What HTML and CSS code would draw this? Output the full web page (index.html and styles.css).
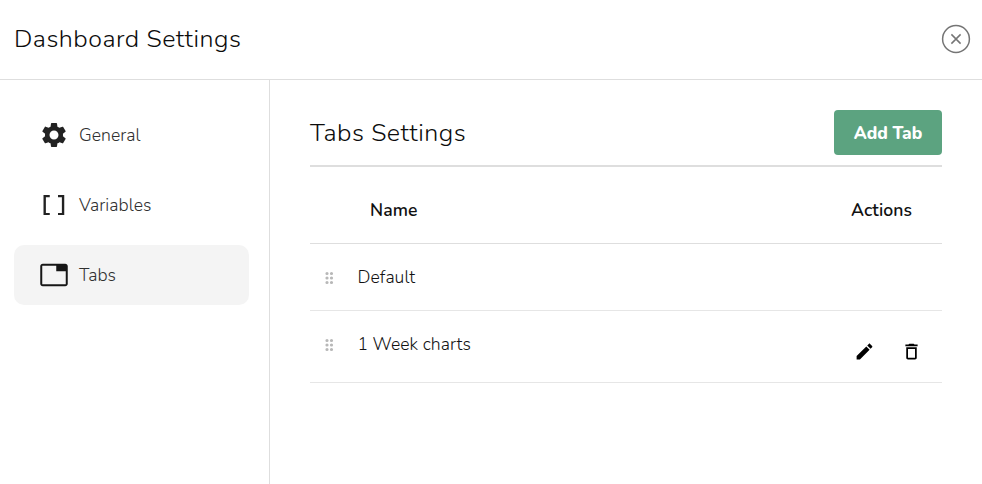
FILE: index.html
```html
<!DOCTYPE html>
<html lang="en">
<head>
<meta charset="utf-8">
<title>Dashboard Settings</title>
<link rel="stylesheet" href="styles.css">
</head>
<body>
<div class="dialog">
  <header class="dialog-header">
    <h1 class="title">Dashboard Settings</h1>
    <button class="close" aria-label="Close"><svg viewBox="0 0 30 30"><circle cx="15" cy="15" r="13.4"/><path d="M10.4 10.4l9.2 9.2M19.6 10.4l-9.2 9.2"/></svg></button>
  </header>
  <div class="dialog-body">
    <nav class="sidebar">
      <a class="nav-item"><svg viewBox="0 0 24 24"><path d="M19.14 12.94c.04-.3.06-.61.06-.94 0-.32-.02-.64-.07-.94l2.03-1.58c.18-.14.23-.41.12-.61l-1.92-3.32c-.12-.22-.37-.29-.59-.22l-2.39.96c-.5-.38-1.03-.7-1.62-.94l-.36-2.54c-.04-.24-.24-.41-.48-.41h-3.84c-.24 0-.43.17-.47.41l-.36 2.54c-.59.24-1.13.57-1.62.94l-2.39-.96c-.22-.08-.47 0-.59.22L2.74 8.87c-.12.21-.08.47.12.61l2.03 1.58c-.05.3-.09.63-.09.94s.02.64.07.94l-2.03 1.58c-.18.14-.23.41-.12.61l1.92 3.32c.12.22.37.29.59.22l2.39-.96c.5.38 1.03.7 1.62.94l.36 2.54c.05.24.24.41.48.41h3.84c.24 0 .44-.17.47-.41l.36-2.54c.59-.24 1.13-.56 1.62-.94l2.39.96c.22.08.47 0 .59-.22l1.92-3.32c.12-.22.07-.47-.12-.61l-2.01-1.58zM12 15.6c-1.98 0-3.6-1.62-3.6-3.6s1.62-3.6 3.6-3.6 3.6 1.62 3.6 3.6-1.62 3.6-3.6 3.6z"/></svg><span>General</span></a>
      <a class="nav-item"><svg viewBox="0 0 24 24"><path d="M3.6 4h5v1.7H5.5v12.6h3.1V20h-5zM20.2 4h-5v1.7h3.1v12.6h-3.1V20h5z"/></svg><span>Variables</span></a>
      <a class="nav-item active"><svg viewBox="0 0 24 24"><path d="M21 3H3c-1.100 0-2 .9-2 2v14c0 1.100.9 2 2 2h18c1.100 0 2-.9 2-2V5c0-1.100-.9-2-2-2zm.4 16.400H2.600V4.600H13.800V9h7.600v10.400z"/></svg><span>Tabs</span></a>
    </nav>
    <main class="content">
      <div class="content-header">
        <h2 class="title">Tabs Settings</h2>
        <button class="add">Add Tab</button>
      </div>
      <div class="row head">
        <span class="name">Name</span>
        <span>Actions</span>
      </div>
      <div class="row">
        <svg class="grip" viewBox="0 0 10 14"><path d="M3 2.500h0M7.500 2.500h0M3 7h0M7.500 7h0M3 11.500h0M7.500 11.500h0"/></svg>
        <span class="name">Default</span>
      </div>
      <div class="row last">
        <svg class="grip" viewBox="0 0 10 14"><path d="M3 2.500h0M7.500 2.500h0M3 7h0M7.500 7h0M3 11.500h0M7.500 11.500h0"/></svg>
        <span class="name">1 Week charts</span>
        <div class="actions">
          <svg viewBox="0 0 24 24"><path d="M3 17.250V21h3.750L17.810 9.940l-3.750-3.750L3 17.250zM20.710 7.040c.39-.39.39-1.020 0-1.410l-2.340-2.340c-.39-.39-1.020-.39-1.410 0l-1.830 1.830 3.750 3.750 1.830-1.830z"/></svg>
          <svg viewBox="0 0 24 24"><path d="M6 19c0 1.100.9 2 2 2h8c1.100 0 2-.9 2-2V7H6v12zM8 9h8v10H8V9zm7.500-5l-1-1h-5l-1 1H5v2h14V4z"/></svg>
        </div>
      </div>
    </main>
  </div>
</div>
</body>
</html>
```
FILE: styles.css
```css
* { box-sizing: border-box; }
body { margin: 0; background: #fff; color: #121212; font: 300 17.6px/24px Nunito, Lato, sans-serif; letter-spacing: .06px; }
button { font-family: inherit; border: 0; padding: 0; }
.dialog { height: 484px; display: flex; flex-direction: column; overflow: hidden; }
.dialog-header { height: 80px; flex: none; display: flex; align-items: center; justify-content: space-between; padding: 0 11px 2px 14px; border-bottom: 1px solid #dedede; }
.title { margin: 0; font-size: 25px; line-height: 34px; letter-spacing: .5px; font-weight: 300; color: #0c0c0c; white-space: nowrap; }
.close { width: 30px; height: 30px; background: none; }
.close svg { display: block; width: 30px; height: 30px; fill: none; stroke: #757575; stroke-width: 1.5; }
.dialog-body { flex: 1; display: flex; }
.sidebar { width: 270px; flex: none; padding: 25px 20px 0 14px; border-right: 1px solid #dedede; display: flex; flex-direction: column; gap: 10px; }
.nav-item { height: 60px; display: flex; align-items: center; gap: 10px; padding-left: 25px; border-radius: 10px; color: #303030; }
.nav-item svg { width: 30px; height: 30px; fill: #222; }
.active { background: #f4f4f4; }
.active svg { fill: #161616; }
.content { flex: 1; padding: 30px 40px 0; }
.content-header { height: 57px; display: flex; align-items: flex-start; justify-content: space-between; border-bottom: 2px solid #dedede; }
.content-header .title { padding-top: 6px; }
.add { width: 108px; height: 45px; padding-top: 2px; border-radius: 4px; background: #5ca380; color: #fff; font-size: 17.3px; font-weight: 800; }
.row { height: 67px; display: flex; align-items: center; border-bottom: 1px solid #e6e6e6; }
.name { flex: 1; }
.head { height: 77px; padding: 10px 30px 0 60px; border-color: #dedede; font-weight: 600; color: #111; }
.grip { width: 10px; height: 14px; margin: 1px 23.5px 0 14px; fill: none; stroke: #b8b8b8; stroke-width: 3.2; stroke-linecap: round; }
.last { height: 72px; padding-bottom: 5px; }
.actions { display: flex; gap: 26px; padding: 14px 20px 0 0; }
.actions svg { width: 21px; height: 21px; fill: #000; }
```
